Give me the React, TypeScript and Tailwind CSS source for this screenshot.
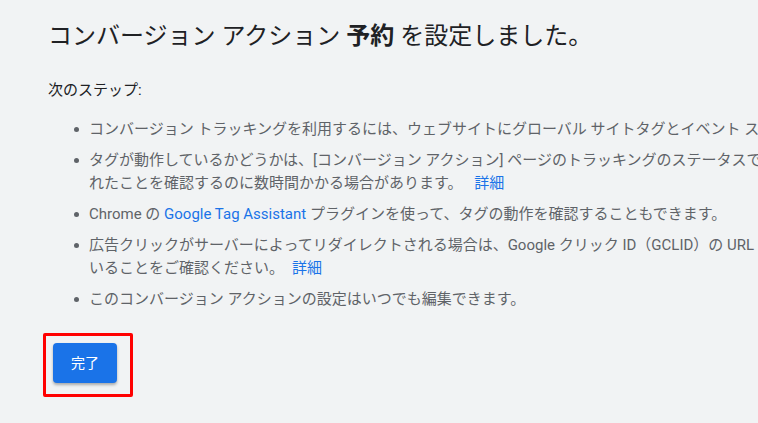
import React from 'react';

const font = { fontFamily: 'Roboto, "Noto Sans CJK JP", sans-serif' };

const Bullet: React.FC<{ children: React.ReactNode }> = ({ children }) => (
  <li className="flex mb-2">
    <span className="w-[41px] shrink-0 flex justify-end pr-[10px] pt-[9px]">
      <span className="block w-[5px] h-[5px] rounded-full bg-[#5f6368]" />
    </span>
    <div className="whitespace-nowrap">{children}</div>
  </li>
);

const Link: React.FC<{ children: React.ReactNode; className?: string }> = ({ children, className }) => (
  <a className={`text-[#1a73e8] ${className ?? ''}`}>{children}</a>
);

export default function App() {
  return (
    <div className="w-[758px] h-[423px] overflow-hidden bg-[#f1f3f4] pl-[48px] pt-[20px]" style={font}>
      <h1 className="text-[24px] leading-[32px] text-[#202124] font-normal whitespace-nowrap">
        コンバージョン アクション <span className="font-bold">予約</span> を設定しました。
      </h1>

      <p className="mt-[27px] text-[15px] leading-[23px] text-[#202124]">次のステップ:</p>

      <ul className="mt-[16px] text-[15px] leading-[23px] text-[#5f6368]">
        <Bullet>
          コンバージョン トラッキングを利用するには、ウェブサイトにグローバル サイトタグとイベント スニペットを追加する必要があります。
        </Bullet>
        <Bullet>
          <div>タグが動作しているかどうかは、[コンバージョン アクション] ページのトラッキングのステータスで確認できます。タグが検出さ</div>
          <div>
            れたことを確認するのに数時間かかる場合があります。 <Link className="ml-2">詳細</Link>
          </div>
        </Bullet>
        <Bullet>
          Chrome の <Link>Google Tag Assistant</Link> プラグインを使って、タグの動作を確認することもできます。
        </Bullet>
        <Bullet>
          <div>広告クリックがサーバーによってリダイレクトされる場合は、Google クリック ID（GCLID）の URL パラメータが保持されて</div>
          <div>
            いることをご確認ください。<Link className="ml-2">詳細</Link>
          </div>
        </Bullet>
        <Bullet>このコンバージョン アクションの設定はいつでも編集できます。</Bullet>
      </ul>

      <div className="mt-[14px] ml-[-5px] inline-block border-[3px] border-[#ff0000] rounded-[2px] pt-[7px] pl-[7px] pr-[13px] pb-[11px]">
        <button className="w-[64px] h-[40px] rounded-[4px] bg-[#1a73e8] text-white text-[14px] shadow-[0_2px_3px_rgba(0,0,0,0.3)]">
          完了
        </button>
      </div>
    </div>
  );
}
